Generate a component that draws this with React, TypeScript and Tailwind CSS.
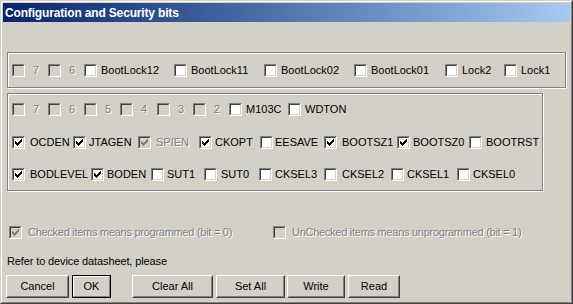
import React from "react"

type Bit = {
  label: string
  w: string
  gap: string
  checked?: boolean
  disabled?: boolean
}

const lockBits: Bit[] = [
  { label: "7", w: "w-[36px]", gap: "ml-[8px]", disabled: true },
  { label: "6", w: "w-[36px]", gap: "ml-[8px]", disabled: true },
  { label: "BootLock12", w: "w-[90px]", gap: "ml-[4px]" },
  { label: "BootLock11", w: "w-[90px]", gap: "ml-[4px]" },
  { label: "BootLock02", w: "w-[90px]", gap: "ml-[4px]" },
  { label: "BootLock01", w: "w-[91px]", gap: "ml-[4px]" },
  { label: "Lock2", w: "w-[59px]", gap: "ml-[4px]" },
  { label: "Lock1", w: "w-auto", gap: "ml-[4px]" },
]

const extBits: Bit[] = [
  { label: "7", w: "w-[36px]", gap: "ml-[8px]", disabled: true },
  { label: "6", w: "w-[36px]", gap: "ml-[8px]", disabled: true },
  { label: "5", w: "w-[36px]", gap: "ml-[8px]", disabled: true },
  { label: "4", w: "w-[37px]", gap: "ml-[8px]", disabled: true },
  { label: "3", w: "w-[36px]", gap: "ml-[8px]", disabled: true },
  { label: "2", w: "w-[36px]", gap: "ml-[8px]", disabled: true },
  { label: "M103C", w: "w-[59px]", gap: "ml-[4px]" },
  { label: "WDTON", w: "w-auto", gap: "ml-[4px]" },
]

const highBits: Bit[] = [
  { label: "OCDEN", w: "w-[61px]", gap: "ml-[5px]", checked: true },
  { label: "JTAGEN", w: "w-[65px]", gap: "ml-[3px]", checked: true },
  { label: "SPIEN", w: "w-[61px]", gap: "ml-[5px]", checked: true, disabled: true },
  { label: "CKOPT", w: "w-[61px]", gap: "ml-[3px]", checked: true },
  { label: "EESAVE", w: "w-[64px]", gap: "ml-[2px]" },
  { label: "BOOTSZ1", w: "w-[73px]", gap: "ml-[5px]", checked: true },
  { label: "BOOTSZ0", w: "w-[72px]", gap: "ml-[3px]", checked: true },
  { label: "BOOTRST", w: "w-auto", gap: "ml-[4px]" },
]

const lowBits: Bit[] = [
  { label: "BODLEVEL", w: "w-[79px]", gap: "ml-[5px]", checked: true },
  { label: "BODEN", w: "w-[60px]", gap: "ml-[3px]", checked: true },
  { label: "SUT1", w: "w-[53px]", gap: "ml-[3px]" },
  { label: "SUT0", w: "w-[55px]", gap: "ml-[4px]" },
  { label: "CKSEL3", w: "w-[65px]", gap: "ml-[3px]" },
  { label: "CKSEL2", w: "w-[67px]", gap: "ml-[5px]" },
  { label: "CKSEL1", w: "w-[66px]", gap: "ml-[3px]" },
  { label: "CKSEL0", w: "w-auto", gap: "ml-[3px]" },
]

// classic 7x7 tick, one rect per pixel
const tick = [
  [6, 0], [5, 1], [6, 1], [0, 2], [4, 2], [5, 2], [6, 2],
  [0, 3], [1, 3], [3, 3], [4, 3], [5, 3],
  [0, 4], [1, 4], [2, 4], [3, 4], [4, 4],
  [1, 5], [2, 5], [3, 5], [2, 6],
]

function CheckBox({ checked, disabled }: { checked?: boolean; disabled?: boolean }) {
  return (
    <span className="block h-[13px] w-[13px] shrink-0 border border-t-[#808080] border-l-[#808080] border-b-white border-r-white">
      <span
        className={`block h-[11px] w-[11px] border border-t-[#404040] border-l-[#404040] border-b-[#D4D0C8] border-r-[#D4D0C8] ${
          disabled ? "bg-[#D4D0C8]" : "bg-white"
        }`}
      >
        {checked && (
          <svg width="7" height="7" viewBox="0 0 7 7" className="m-px block" shapeRendering="crispEdges">
            {tick.map(([x, y]) => (
              <rect key={`${x}-${y}`} x={x} y={y} width="1" height="1" fill={disabled ? "#808080" : "#000"} />
            ))}
          </svg>
        )}
      </span>
    </span>
  )
}

function BitRow({ bits, className = "" }: { bits: Bit[]; className?: string }) {
  return (
    <div className={`flex h-[13px] items-center ${className}`}>
      {bits.map((b, i) => (
        <div key={i} className={`flex shrink-0 items-center ${b.w}`}>
          <CheckBox checked={b.checked} disabled={b.disabled} />
          <span
            className={`${b.gap} leading-[13px] whitespace-nowrap ${
              b.disabled ? "text-[#808080] [text-shadow:1px_1px_0_#fff]" : "text-black"
            }`}
          >
            {b.label}
          </span>
        </div>
      ))}
    </div>
  )
}

function Button({ label, w, isDefault }: { label: string; w: string; isDefault?: boolean }) {
  if (isDefault) {
    return (
      <div className={`h-[23px] ${w} shrink-0 border border-black bg-[#D4D0C8]`}>
        <div className="flex h-full items-center justify-center border border-t-white border-l-white border-b-[#808080] border-r-[#808080]">
          {label}
        </div>
      </div>
    )
  }
  return (
    <div className={`h-[23px] ${w} shrink-0 border border-t-white border-l-white border-b-[#404040] border-r-[#404040] bg-[#D4D0C8]`}>
      <div className="flex h-full items-center justify-center border border-t-[#D4D0C8] border-l-[#D4D0C8] border-b-[#808080] border-r-[#808080]">
        {label}
      </div>
    </div>
  )
}

export default function App() {
  return (
    <div className="h-[304px] w-[573px] border border-t-[#D4D0C8] border-l-[#D4D0C8] border-b-[#404040] border-r-[#404040] bg-[#D4D0C8] font-['Liberation_Sans',Arial,sans-serif] text-[11px] text-black">
      <div className="h-full w-full border border-t-white border-l-white border-b-[#808080] border-r-[#808080] p-px">
        {/* Caption */}
        <div className="flex h-[19px] items-center bg-linear-to-r from-[#0A246A] to-[#A6CAF0] pl-[2px]">
          <span className="text-[12px] font-bold tracking-[-0.16px] text-white">Configuration and Security bits</span>
        </div>

        {/* Lock bits */}
        <div className="ml-[4px] mt-[30px] h-[36px] w-[559px] border border-[#808080] pl-[4px] pt-[11px] shadow-[inset_1px_1px_0_#fff,1px_1px_0_#fff]">
          <BitRow bits={lockBits} />
        </div>

        {/* Fuse bits */}
        <div className="ml-[4px] mt-[5px] h-[98px] w-[536px] border border-[#808080] pl-[4px] pt-[9px] shadow-[inset_1px_1px_0_#fff,1px_1px_0_#fff]">
          <BitRow bits={extBits} />
          <BitRow bits={highBits} className="mt-[20px]" />
          <BitRow bits={lowBits} className="mt-[19px]" />
        </div>

        {/* Legend */}
        <div className="ml-[6px] mt-[35px] flex h-[13px] items-center tracking-[-0.27px]">
          <div className="flex w-[264px] items-center">
            <CheckBox checked disabled />
            <span className="ml-[6px] text-[#808080] [text-shadow:1px_1px_0_#fff]">Checked items means programmed (bit = 0)</span>
          </div>
          <div className="flex items-center">
            <CheckBox disabled />
            <span className="ml-[6px] text-[#808080] [text-shadow:1px_1px_0_#fff]">UnChecked items means unprogrammed (bit = 1)</span>
          </div>
        </div>

        <div className="ml-[4px] mt-[16px] leading-[13px] tracking-[-0.12px]">Refer to device datasheet, please</div>

        {/* Buttons */}
        <div className="ml-[3px] mt-[7px] flex">
          <Button label="Cancel" w="w-[63px]" />
          <div className="ml-[3px]">
            <Button label="OK" w="w-[39px]" isDefault />
          </div>
          <div className="ml-[21px]">
            <Button label="Clear All" w="w-[81px]" />
          </div>
          <div className="ml-[3px]">
            <Button label="Set All" w="w-[69px]" />
          </div>
          <div className="ml-[2px]">
            <Button label="Write" w="w-[58px]" />
          </div>
          <div className="ml-[3px]">
            <Button label="Read" w="w-[52px]" />
          </div>
        </div>
      </div>
    </div>
  )
}
